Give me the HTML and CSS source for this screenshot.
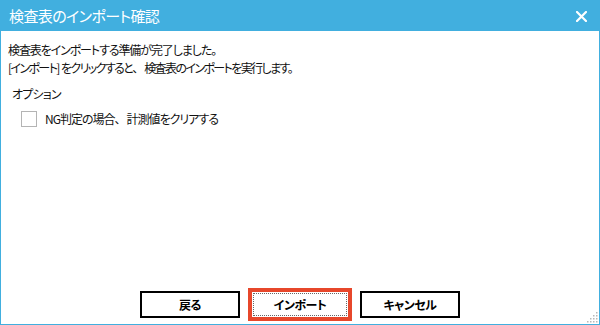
FILE: index.html
```html
<!DOCTYPE html>
<html lang="ja">
<head>
<meta charset="utf-8">
<title>検査表のインポート確認</title>
<link rel="stylesheet" href="styles.css">
</head>
<body>
<div class="window">
  <div class="titlebar">
    <span class="title">検査表のインポート確認</span>
    <svg class="close" width="11" height="11" viewBox="0 0 11 11"><path d="M1 1 L10 10 M10 1 L1 10" stroke="#fff" stroke-width="2.2" stroke-linecap="square"/></svg>
  </div>
  <div class="content">
    <p class="msg msg-ready">検査表をインポートする準備が完了しました。</p>
    <p class="msg msg-click">[インポート<span class="bracket">]</span>をクリックすると<span class="comma">、</span>検査表のインポートを実行します。</p>
    <div class="options">
      <div class="opt-label">オプション</div>
      <label class="check-row"><span class="checkbox"></span><span class="check-text">NG判定の場合<span class="comma">、</span>計測値をクリアする</span></label>
    </div>
  </div>
  <div class="footer">
    <button class="btn">戻る</button>
    <button class="btn primary"><span class="focus">インポート</span></button>
    <button class="btn">キャンセル</button>
  </div>
  <svg class="grip" width="12" height="12" viewBox="0 0 12 12" fill="#b8b8b8">
    <rect x="10" y="1" width="1.5" height="1.5"/>
    <rect x="7" y="4" width="1.5" height="1.5"/><rect x="10" y="4" width="1.5" height="1.5"/>
    <rect x="4" y="7" width="1.5" height="1.5"/><rect x="7" y="7" width="1.5" height="1.5"/><rect x="10" y="7" width="1.5" height="1.5"/>
    <rect x="1" y="10" width="1.5" height="1.5"/><rect x="4" y="10" width="1.5" height="1.5"/><rect x="7" y="10" width="1.5" height="1.5"/><rect x="10" y="10" width="1.5" height="1.5"/>
  </svg>
</div>
</body>
</html>
```
FILE: styles.css
```css
html, body {
  margin: 0;
  padding: 0;
  background: #fff;
}
body {
  font-family: "Noto Sans CJK JP", "Noto Sans", sans-serif;
  font-feature-settings: "palt";
  color: #111;
}
.window {
  position: relative;
  box-sizing: border-box;
  width: 600px;
  height: 325px;
  border: 1px solid #41afdf;
  border-top: none;
  display: flex;
  flex-direction: column;
}
.titlebar {
  height: 31px;
  margin: 0 -1px;
  background: #41afdf;
  display: flex;
  align-items: center;
  justify-content: space-between;
  padding: 0 13px 0 9px;
  flex: none;
}
.title {
  color: #fff;
  font-size: 15px;
  line-height: 31px;
  letter-spacing: -0.6px;
}
.close {
  display: block;
  margin-top: 1px;
}
.content {
  flex: 1;
  padding: 10px 7px 0;
  font-size: 12px;
}
.msg {
  margin: 0;
  line-height: 18px;
}
.msg-ready {
  letter-spacing: -1.1px;
}
.msg-click {
  letter-spacing: -1.6px;
}
.bracket {
  letter-spacing: 0.5px;
}
.comma {
  font-feature-settings: normal;
  letter-spacing: 0;
}
.options {
  margin-top: 7px;
  padding-left: 4px;
}
.opt-label {
  line-height: 19px;
  letter-spacing: -0.8px;
}
.check-row {
  display: flex;
  align-items: center;
  margin-top: 7px;
  padding-left: 9px;
  gap: 8px;
  line-height: 18px;
}
.check-text {
  letter-spacing: -1px;
}
.checkbox {
  width: 14px;
  height: 14px;
  border: 1px solid #b4b4b4;
  background: #fff;
}
.footer {
  flex: none;
  display: flex;
  justify-content: center;
  align-items: center;
  gap: 8px;
  padding-bottom: 3px;
  height: 34px;
}
.btn {
  box-sizing: border-box;
  width: 100px;
  height: 27px;
  border: 2px solid #000;
  background: #fff;
  font-family: inherit;
  font-feature-settings: "palt";
  font-size: 12px;
  font-weight: bold;
  letter-spacing: -0.5px;
  color: #000;
  padding: 0;
  margin: 0;
}
.btn.primary {
  width: 104px;
  height: 33px;
  border: 4px solid #e7472b;
  padding: 1px;
}
.focus {
  display: flex;
  align-items: center;
  justify-content: center;
  height: 100%;
  box-sizing: border-box;
  border: 1px dotted #666;
}
.grip {
  position: absolute;
  right: 1px;
  bottom: 1px;
}
```
